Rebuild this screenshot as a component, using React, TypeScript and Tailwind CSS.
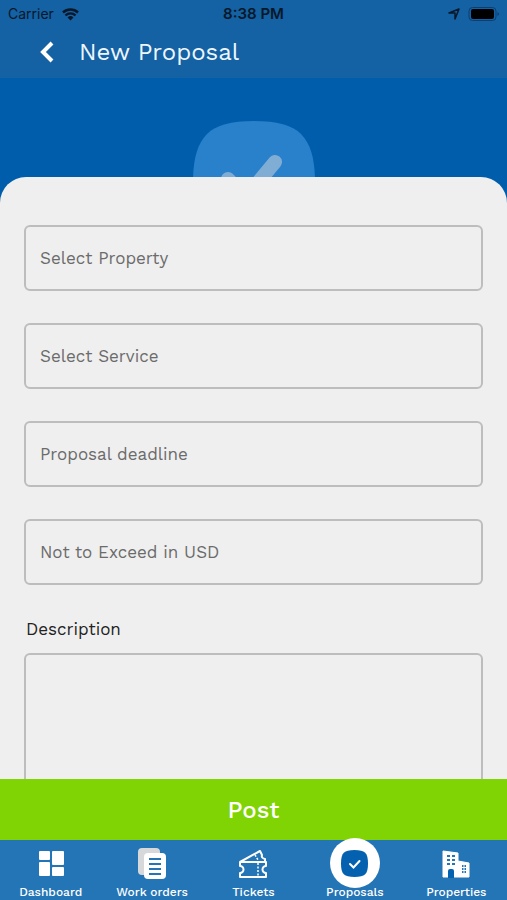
import React from "react";

const fields = [
  { id: "property", label: "Select Property" },
  { id: "service", label: "Select Service" },
  { id: "deadline", label: "Proposal deadline" },
  { id: "limit", label: "Not to Exceed in USD" },
];

const DashboardIcon = () => (
  <svg width="26" height="26" viewBox="0 0 26 26" fill="#fff">
    <rect x="1" y="0" width="11" height="9" rx="1" />
    <rect x="1" y="11" width="11" height="14" rx="1" />
    <rect x="14" y="0" width="12" height="14" rx="1" />
    <rect x="14" y="16" width="12" height="9" rx="1" />
  </svg>
);

const WorkOrdersIcon = () => (
  <svg width="30" height="32" viewBox="0 0 30 32">
    <rect x="1" y="0" width="22" height="27" rx="4" fill="#d6d8da" />
    <rect x="7" y="5" width="22" height="26" rx="4" fill="#fff" />
    <path d="M12 11h12M12 16h12M12 21h12M12 26h12" stroke="#2475b6" strokeWidth="2" />
  </svg>
);

const TicketsIcon = () => (
  <svg width="30" height="30" viewBox="0 0 30 30" fill="none" stroke="#fff" strokeWidth="2" strokeLinejoin="round">
    <path d="M2 13h26v4a3.500 3.500 0 0 0 0 7v4H2v-4a3.500 3.500 0 0 0 0-7z" />
    <path d="M2 13L22 2l2 4q-1 3 3 4v3" />
    <path d="M20 14v13M17 6l3 5" strokeWidth="1.500" strokeDasharray="2 1.500" />
  </svg>
);

const ProposalsIcon = () => (
  <svg width="27" height="27" viewBox="0 0 27 27">
    <path d="M13.500 0C24 0 27 3 27 13.500S24 27 13.500 27 0 24 0 13.500 3 0 13.500 0z" fill="#0461b0" />
    <path d="M9 14l3.500 3.500L18.500 11" fill="none" stroke="#fff" strokeWidth="2" strokeLinecap="round" />
  </svg>
);

const PropertiesIcon = () => (
  <svg width="28" height="28" viewBox="0 0 28 28">
    <path d="M1 1l15 2v8l11 2v14H1z" fill="#fff" stroke="#fff" strokeLinejoin="round" />
    <path
      d="M5 6h3M10 6h3M5 10h3M10 10h3M5 14h3M10 14h3M20 16h1.500M22.500 16h1.500M20 19h1.500M22.500 19h1.500M20 22h1.500M22.500 22h1.500"
      stroke="#2475b6"
      strokeWidth="2"
    />
    <path d="M6 28v-7a2 2 0 0 1 2-2h2a2 2 0 0 1 2 2v7z" fill="#0461b0" />
  </svg>
);

const tabs = [
  { name: "Dashboard", icon: <DashboardIcon /> },
  { name: "Work orders", icon: <WorkOrdersIcon /> },
  { name: "Tickets", icon: <TicketsIcon /> },
  { name: "Proposals", icon: <ProposalsIcon />, active: true },
  { name: "Properties", icon: <PropertiesIcon /> },
];

const StatusBar = () => (
  <div className="grid h-7 grid-cols-3 items-center px-2 text-sm text-[#07182a] font-[Inter,sans-serif]">
    <div className="flex items-center gap-2">
      <span>Carrier</span>
      <svg width="17" height="13" viewBox="0 0 17 13" fill="none" stroke="#07182a" strokeWidth="2.400">
        <path d="M1 4.500a11 11 0 0 1 15 0M3.500 7.500a7 7 0 0 1 10 0" />
        <path d="M5.500 9.500a4.300 4.300 0 0 1 6 0l-3 3z" fill="#07182a" stroke="none" />
      </svg>
    </div>
    <span className="whitespace-nowrap text-center text-[15px] font-semibold">8:38 PM</span>
    <div className="flex items-center justify-end gap-2">
      <svg width="12" height="12" viewBox="0 0 12 12" fill="none" stroke="#07182a" strokeWidth="1.500" strokeLinejoin="round">
        <path d="M1 5L11 1 7 11V5z" />
      </svg>
      <svg width="31" height="14" viewBox="0 0 31 14">
        <rect x="1" y="0.500" width="27" height="13" rx="3.500" fill="none" stroke="#0c3f70" />
        <rect x="3" y="2" width="23" height="10" rx="2" fill="#000" />
        <path d="M29.500 5v4c2-1 2-3 0-4z" fill="#0c3f70" />
      </svg>
    </div>
  </div>
);

const App = () => {
  return (
    <main className="flex h-screen flex-col overflow-hidden bg-[#005dab] font-['Work_Sans','Noto_Sans',sans-serif]">
      <header className="shrink-0 bg-[#1461a3]">
        <StatusBar />
        <div className="flex h-[50px] items-center gap-6 pb-0.5 pl-[39px]">
          <button aria-label="Back">
            <svg width="16" height="24" viewBox="0 0 16 24" fill="none" stroke="#fff" strokeWidth="4">
              <path d="M13 3L4 12l9 9" />
            </svg>
          </button>
          <h1 className="text-2xl text-[#eef6fd]">New Proposal</h1>
        </div>
      </header>

      <div className="flex h-[99px] shrink-0 items-start justify-center overflow-hidden pt-[43px]">
        <svg width="122" height="122" viewBox="0 0 122 122" className="shrink-0">
          <path d="M61 0C84 0 99 4 108 13C118 23 122 39 122 61C122 108 108 122 61 122S0 108 0 61C0 39 4 23 14 13C23 4 38 0 61 0z" fill="#2980cb" />
          <path d="M35 58l18 18 29-35" fill="none" stroke="#80add3" strokeWidth="14" strokeLinecap="round" strokeLinejoin="round" />
        </svg>
      </div>

      <form className="flex min-h-0 flex-1 flex-col overflow-hidden rounded-t-[26px] bg-[#efefef] px-6 pt-12">
        <div className="flex flex-col gap-8">
          {fields.map((el) => (
            <input
              key={el.id}
              id={el.id}
              aria-label={el.label}
              placeholder={el.label}
              className="h-[66px] w-full rounded-md border-2 border-[#bdbdbd] px-3.5 text-[17px] text-[#222] placeholder:text-[#6b6b6b]"
            />
          ))}
        </div>
        <label htmlFor="description" className="mt-8 pl-0.5 text-[17px] leading-6 text-[#222]">
          Description
        </label>
        <textarea
          id="description"
          className="mt-3 h-40 w-full shrink-0 resize-none rounded-md border-2 border-[#bdbdbd] p-3.5"
        />
      </form>

      <button className="h-[61px] shrink-0 bg-[#80d404] text-2xl font-medium text-white">Post</button>

      <nav className="grid h-[60px] shrink-0 grid-cols-5 bg-[#2475b6]">
        {tabs.map((el) => (
          <a key={el.name} href="#" className="flex flex-col items-center text-xs font-medium text-white">
            <span
              className={
                el.active
                  ? "-mt-0.5 flex size-[50px] shrink-0 items-center justify-center rounded-full bg-white"
                  : "flex h-12 shrink-0 items-center justify-center"
              }
            >
              {el.icon}
            </span>
            <span className="-mt-1 whitespace-nowrap">{el.name}</span>
          </a>
        ))}
      </nav>
    </main>
  );
};

export default App;
